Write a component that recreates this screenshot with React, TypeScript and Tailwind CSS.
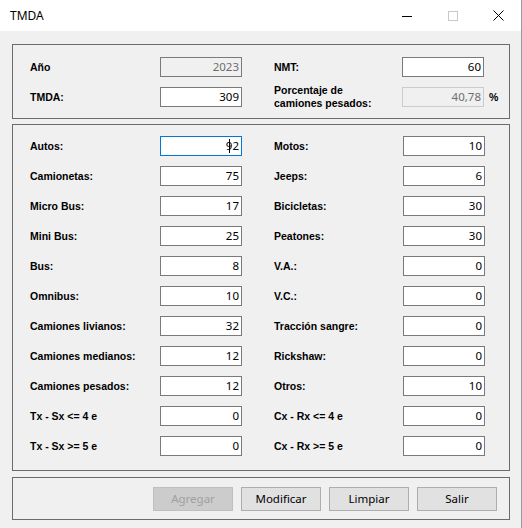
import React from "react";

const LBL = "font-['Liberation_Sans',Arial,sans-serif] font-bold text-[10.5px] leading-[13px] text-black whitespace-nowrap";
const NUM = "font-['Noto_Sans','Open_Sans',sans-serif] text-[11.5px] leading-none";

type BoxKind = "normal" | "readonly" | "disabled" | "focus";

function Box({ value, kind = "normal" }: { value: string; kind?: BoxKind }) {
  let cls = "border-[#7a7a7a] bg-white text-black";
  if (kind === "readonly") cls = "border-[#7a7a7a] bg-[#f0f0f0] text-[#6d6d6d]";
  if (kind === "disabled") cls = "border-[#cccccc] bg-[#f0f0f0] text-[#6d6d6d]";
  if (kind === "focus") cls = "border-[#0078d7] bg-white text-black";
  return (
    <div className={`h-[20px] w-[82px] border ${cls} flex items-center justify-end pr-[2px] ${NUM}`}>
      {kind === "focus" && <span className="inline-block w-px h-[14px] bg-black mr-[-4px] relative z-10" />}
      <span>{value}</span>
    </div>
  );
}

const left: [string, string][] = [
  ["Autos:", "92"],
  ["Camionetas:", "75"],
  ["Micro Bus:", "17"],
  ["Mini Bus:", "25"],
  ["Bus:", "8"],
  ["Omnibus:", "10"],
  ["Camiones livianos:", "32"],
  ["Camiones medianos:", "12"],
  ["Camiones pesados:", "12"],
  ["Tx - Sx <= 4 e", "0"],
  ["Tx - Sx >= 5 e", "0"],
];
const right: [string, string][] = [
  ["Motos:", "10"],
  ["Jeeps:", "6"],
  ["Bicicletas:", "30"],
  ["Peatones:", "30"],
  ["V.A.:", "0"],
  ["V.C.:", "0"],
  ["Tracción sangre:", "0"],
  ["Rickshaw:", "0"],
  ["Otros:", "10"],
  ["Cx - Rx <= 4 e", "0"],
  ["Cx - Rx >= 5 e", "0"],
];

function Btn({ text, disabled }: { text: string; disabled?: boolean }) {
  return (
    <div
      className={`w-[80px] h-[24px] border flex items-center justify-center ${NUM} ${
        disabled ? "bg-[#cccccc] border-[#bfbfbf] text-[#a0a0a0]" : "bg-[#e1e1e1] border-[#adadad] text-black"
      }`}
    >
      {text}
    </div>
  );
}

export default function App() {
  return (
    <div className="w-[522px] h-[528px] bg-[#f0f0f0] border-r border-[#9a9a9a] overflow-hidden">
      {/* title bar */}
      <div className="h-[31px] bg-white flex items-center">
        <div className="pl-[10px] flex-1 font-['Noto_Sans','Open_Sans',sans-serif] text-[12px] text-black">TMDA</div>
        <div className="w-[46px] h-[31px] flex items-center justify-center">
          <svg width="10" height="10" viewBox="0 0 10 10">
            <line x1="0" y1="5.5" x2="10" y2="5.5" stroke="#000" strokeWidth="1" />
          </svg>
        </div>
        <div className="w-[46px] h-[31px] flex items-center justify-center">
          <svg width="10" height="10" viewBox="0 0 10 10">
            <rect x="0.5" y="0.5" width="9" height="9" fill="none" stroke="#c8c8c8" strokeWidth="1" />
          </svg>
        </div>
        <div className="w-[45px] h-[31px] flex items-center justify-center">
          <svg width="11" height="11" viewBox="0 0 11 11">
            <path d="M0.5 0.5 L10.5 10.5 M10.5 0.5 L0.5 10.5" stroke="#000" strokeWidth="1" fill="none" />
          </svg>
        </div>
      </div>

      {/* group 1 */}
      <div className="ml-[12px] mt-[13px] w-[498px] h-[75px] border border-[#6b6b6b] pl-[17px] pt-[12px]">
        <div className="grid grid-cols-[130px_82px_32px_128px_82px_auto] grid-rows-[20px_20px] gap-y-[10px] items-center">
          <div className={LBL}>Año</div>
          <Box value="2023" kind="readonly" />
          <div />
          <div className={LBL}>NMT:</div>
          <Box value="60" />
          <div />

          <div className={LBL}>TMDA:</div>
          <Box value="309" />
          <div />
          <div className={`${LBL} leading-[12px]`}>
            Porcentaje de
            <br />
            camiones pesados:
          </div>
          <Box value="40,78" kind="disabled" />
          <div className={`${LBL} pl-[5px]`}>%</div>
        </div>
      </div>

      {/* group 2 */}
      <div className="ml-[12px] mt-[5px] w-[498px] h-[347px] border border-[#6b6b6b] pl-[17px] pt-[11px]">
        <div className="grid grid-cols-[130px_82px_32px_129px_82px] auto-rows-[20px] gap-y-[10px] items-center">
          {left.map(([l, v], i) => (
            <React.Fragment key={l}>
              <div className={LBL}>{l}</div>
              <Box value={v} kind={i === 0 ? "focus" : "normal"} />
              <div />
              <div className={LBL}>{right[i][0]}</div>
              <Box value={right[i][1]} />
            </React.Fragment>
          ))}
        </div>
      </div>

      {/* group 3 */}
      <div className="ml-[12px] mt-[6px] w-[498px] h-[43px] border border-[#6b6b6b] flex items-center justify-end gap-[8px] pr-[12px]">
        <Btn text="Agregar" disabled />
        <Btn text="Modificar" />
        <Btn text="Limpiar" />
        <Btn text="Salir" />
      </div>
    </div>
  );
}
